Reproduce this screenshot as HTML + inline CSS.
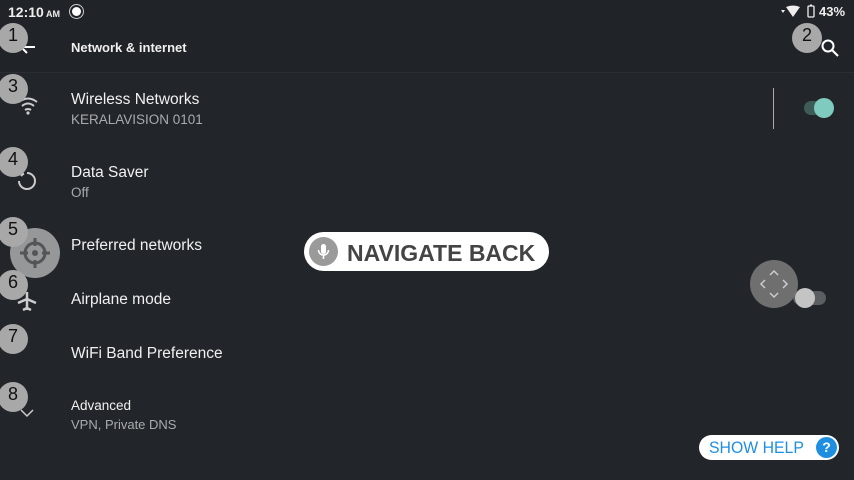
<!DOCTYPE html>
<html><head><style>
body{margin:0;width:854px;height:480px;background:#22262a;font-family:"Liberation Sans",sans-serif;position:relative;overflow:hidden;color:#fff}
.a{position:absolute}
.hdr{left:0;top:0;width:854px;height:72px;background:#202327;border-bottom:1px solid #2a2e32}
.t{position:absolute;left:71px;font-size:15.5px;color:#f0f0f0}
.s{position:absolute;left:71px;font-size:13.5px;color:#a9abad}
.b{position:absolute;width:30px;height:30px;border-radius:50%;background:#a8a8a8;color:#111;font-size:18px;text-align:center;line-height:25px}
</style></head><body>
<div class="a hdr"></div>
<div class="a" style="left:8px;top:4px;font-size:14px;font-weight:bold;color:#eee">12:10<span style="font-size:9px"> AM</span></div>
<div class="a" style="left:72px;top:7px;width:9px;height:9px;border-radius:50%;background:#fff;box-shadow:0 0 0 2px #202327,0 0 0 3px #ccc"></div>
<svg class="a" style="left:780px;top:5px" width="24" height="14"><path d="M1 5h4l-2 3z" fill="#eee"/><path d="M6 2q7-3 14 0l-7 10z" fill="#eee"/></svg>
<svg class="a" style="left:807px;top:4px" width="8" height="14"><rect x="1" y="2" width="6" height="11" rx="1" stroke="#eee" stroke-width="1.3" fill="none"/><rect x="3" y="0.5" width="2" height="2" fill="#eee"/></svg>
<div class="a" style="left:819px;top:4px;font-size:13px;font-weight:bold;color:#eee">43%</div>
<svg class="a" style="left:18px;top:38px" width="18" height="18" viewBox="0 0 18 18"><path d="M17 9H3M9 3L3 9l6 6" stroke="#fff" stroke-width="2" fill="none"/></svg>
<div class="a" style="left:71px;top:40px;font-size:13px;font-weight:bold;color:#f0f0f0">Network &amp; internet</div>
<svg class="a" style="left:820px;top:38px" width="20" height="20"><circle cx="8" cy="8" r="5.5" stroke="#fff" stroke-width="2" fill="none"/><path d="M12 12l6 6" stroke="#fff" stroke-width="2.2"/></svg>
<svg class="a" style="left:17px;top:96px" width="22" height="20"><path d="M2 6q9-7 18 0M5 10q6-5 12 0M8 14q3-2 6 0" stroke="#ccc" stroke-width="2" fill="none"/><circle cx="11" cy="17" r="1.6" fill="#ccc"/></svg>
<div class="t" style="top:91px">Wireless Networks</div>
<div class="s" style="top:112px">KERALAVISION 0101</div>
<div class="a" style="left:773px;top:88px;width:1px;height:41px;background:#aaa"></div>
<div class="a" style="left:804px;top:101px;width:28px;height:14px;border-radius:7px;background:#3e5b58"></div>
<div class="a" style="left:814px;top:98px;width:20px;height:20px;border-radius:50%;background:#7fcbc0"></div>
<svg class="a" style="left:16px;top:170px" width="22" height="22"><path d="M11 3A8 8 0 1 1 3 11" stroke="#ccc" stroke-width="2" fill="none"/><path d="M5 6A8 8 0 0 1 8 3.6" stroke="#ccc" stroke-width="2" fill="none"/></svg>
<div class="t" style="top:164px">Data Saver</div>
<div class="s" style="top:185px">Off</div>
<div class="t" style="top:237px">Preferred networks</div>
<div class="t" style="top:291px">Airplane mode</div>
<div class="t" style="top:345px">WiFi Band Preference</div>
<div class="t" style="top:398px;font-size:13.5px">Advanced</div>
<div class="s" style="top:417px;font-size:13px">VPN, Private DNS</div>
<svg class="a" style="left:16px;top:290px" width="22" height="22"><path d="M11 2v18M2 13l9-4 9 4M7 20l4-2 4 2" stroke="#ccc" stroke-width="2.5" fill="none"/></svg>
<svg class="a" style="left:19px;top:408px" width="16" height="10"><path d="M2 2l6 6 6-6" stroke="#ccc" stroke-width="1.5" fill="none"/></svg>
<div class="a" style="left:10px;top:228px;width:50px;height:50px;border-radius:50%;background:rgba(200,200,200,.7)"></div>
<svg class="a" style="left:17px;top:235px" width="36" height="36"><circle cx="18" cy="18" r="10" stroke="#555" stroke-width="3" fill="none"/><circle cx="18" cy="18" r="3" fill="#555"/><path d="M18 3v8M18 25v8M3 18h8M25 18h8" stroke="#555" stroke-width="3"/></svg>
<div class="b" style="left:-2px;top:23px">1</div>
<div class="b" style="left:792px;top:23px">2</div>
<div class="b" style="left:-2px;top:74px">3</div>
<div class="b" style="left:-2px;top:147px">4</div>
<div class="b" style="left:-2px;top:217px">5</div>
<div class="b" style="left:-2px;top:270px">6</div>
<div class="b" style="left:-2px;top:324px">7</div>
<div class="b" style="left:-2px;top:382px">8</div>
<div class="a" style="left:793px;top:291px;width:33px;height:14px;border-radius:7px;background:#5c5f62"></div>
<div class="a" style="left:795px;top:288px;width:20px;height:20px;border-radius:50%;background:#c4c4c4"></div>
<div class="a" style="left:750px;top:260px;width:48px;height:48px;border-radius:50%;background:rgba(120,120,120,.9)"></div>
<svg class="a" style="left:750px;top:260px" width="48" height="48"><path d="M20 15l4-4 4 4M20 33l4 4 4-4M15 20l-4 4 4 4M33 20l4 4-4 4" stroke="#ccc" stroke-width="1.5" fill="none"/></svg>
<div class="a" style="left:304px;top:232px;width:245px;height:39px;border-radius:20px;background:#fff"></div>
<div class="a" style="left:309px;top:237px;width:29px;height:29px;border-radius:50%;background:#9a9a9a"></div>
<svg class="a" style="left:309px;top:237px" width="29" height="29"><rect x="12" y="7" width="5" height="10" rx="2.5" fill="#fff"/><path d="M9.5 13a5 5 0 0 0 10 0M14.5 18v4" stroke="#fff" stroke-width="1.5" fill="none"/></svg>
<div class="a" style="left:347px;top:240px;font-size:23px;font-weight:bold;color:#444">NAVIGATE BACK</div>
<div class="a" style="left:699px;top:435px;width:140px;height:25px;border-radius:13px;background:#fff"></div>
<div class="a" style="left:709px;top:438px;font-size:17px;color:#1e8fe0;transform:scaleX(.93);transform-origin:left">SHOW HELP</div>
<div class="a" style="left:816px;top:437px;width:21px;height:21px;border-radius:50%;background:#1e8fe0;color:#fff;font-size:14px;font-weight:bold;text-align:center;line-height:21px">?</div>
</body></html>
